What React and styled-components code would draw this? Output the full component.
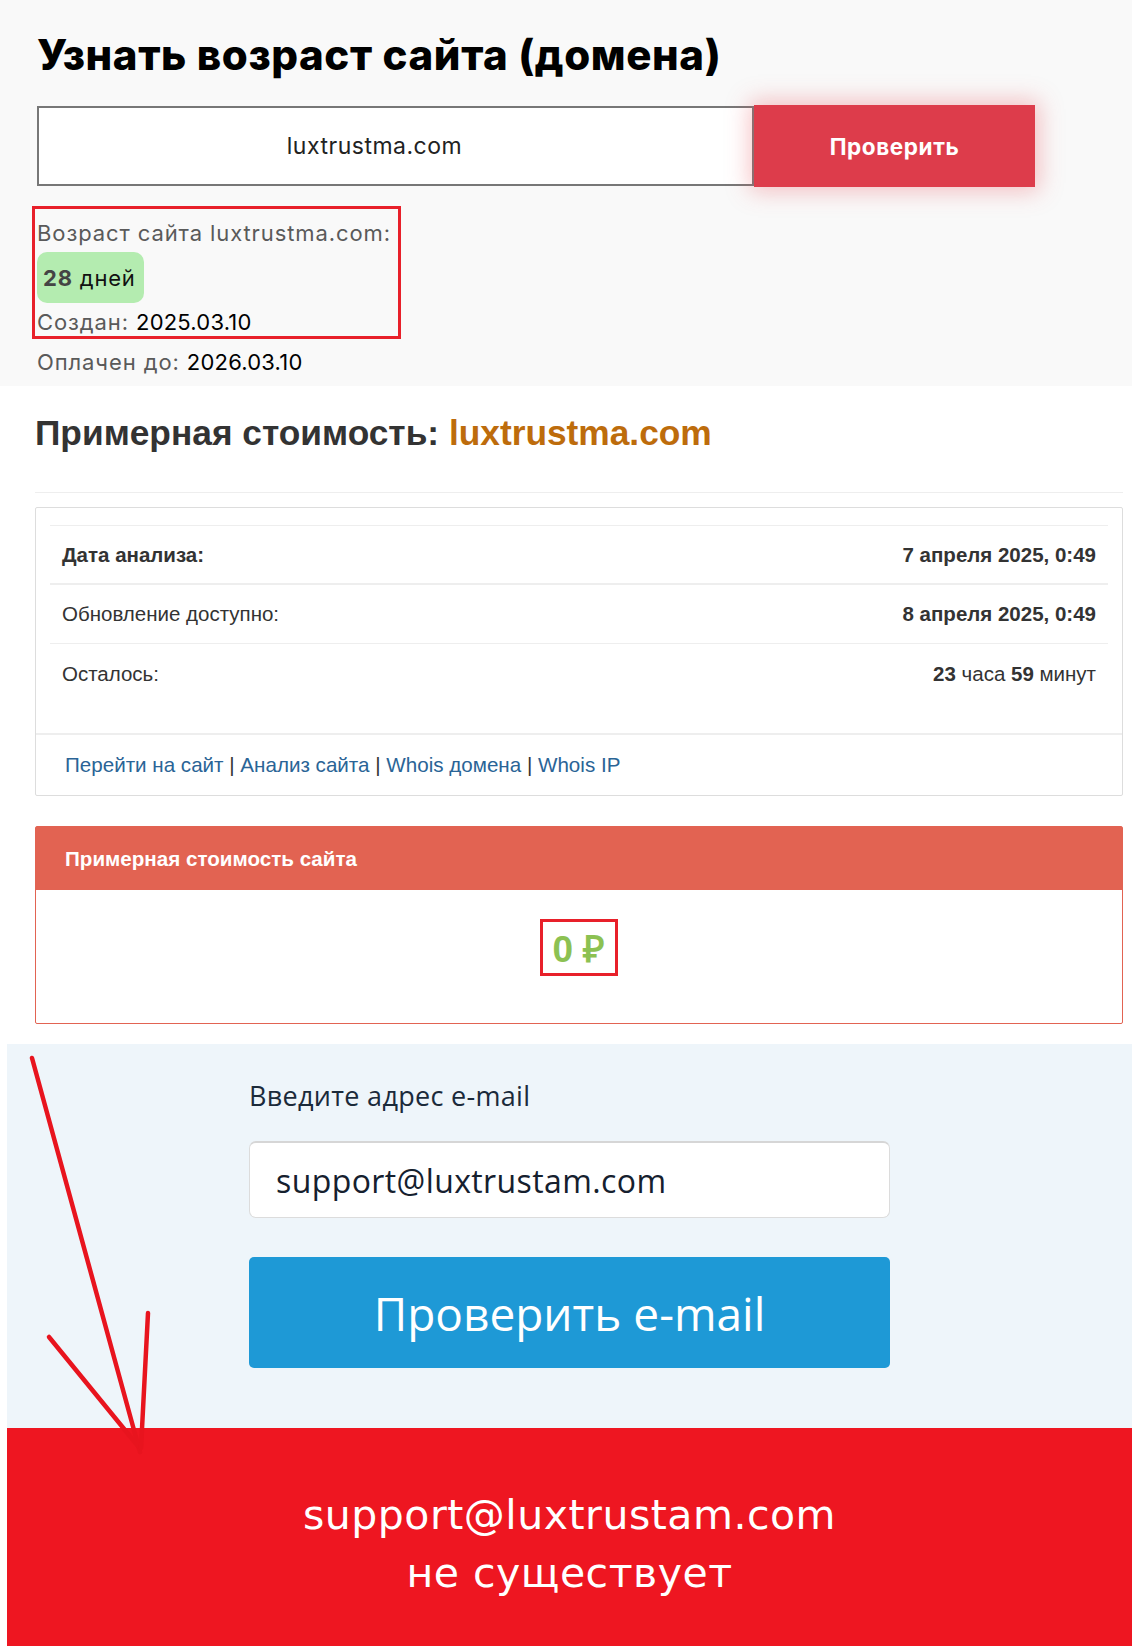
import React from 'react';
import styled, { createGlobalStyle } from 'styled-components';

const GlobalStyle = createGlobalStyle`
  body {
    margin: 0;
    background: #fff;
    font-family: "Liberation Sans", Arial, sans-serif;
  }
`;

const geo = `"Inter", "Noto Sans", sans-serif`;
const humanist = `"Open Sans", "Noto Sans", sans-serif`;

const Page = styled.div`
  position: relative;
  width: 1132px;
  min-height: 1646px;
  overflow: hidden;
`;

/* ---------- domain age block ---------- */

const AgeSection = styled.section`
  background: #f9f9f9;
  padding: 31px 37px 10px;
  font-family: ${geo};
`;

const Title = styled.h1`
  margin: 0;
  font-size: 42px;
  line-height: 48px;
  font-weight: 800;
  color: #000;
  letter-spacing: 0.6px;
`;

const CheckForm = styled.div`
  display: flex;
  align-items: center;
  margin-top: 26px;
`;

const DomainInput = styled.div`
  box-sizing: border-box;
  width: 717px;
  height: 80px;
  border: 2px solid #777;
  background: #fff;
  display: flex;
  align-items: center;
  justify-content: center;
  padding-right: 42px;
  font-size: 23px;
  letter-spacing: 0.5px;
  color: #222;
`;

const RedButton = styled.button`
  width: 281px;
  height: 82px;
  border: 0;
  background: #dd3c4b;
  color: #fff;
  font-family: ${geo};
  font-weight: 700;
  font-size: 22.5px;
  letter-spacing: 0.6px;
  box-shadow: 0 0 22px 4px rgba(233, 80, 90, 0.35);
`;

const AgeBox = styled.div`
  box-sizing: border-box;
  width: 369px;
  margin: 19px 0 0 -5px;
  border: 3px solid #e8202a;
  padding: 10px 0 0 2px;
`;

const InfoLine = styled.div`
  font-size: 22px;
  letter-spacing: 0.9px;
  line-height: ${p => p.$lh || 28}px;
  color: #5a5a5a;
  margin-top: ${p => p.$mt || 0}px;
  white-space: nowrap;
`;

const Value = styled.span`
  color: #000;
  letter-spacing: 0.2px;
`;

const DaysBadge = styled.div`
  display: inline-flex;
  align-items: center;
  height: 51px;
  margin-top: 5px;
  padding: 0 8px 0 6px;
  border-radius: 10px;
  background: #b4ecb0;
  font-size: 22px;
  letter-spacing: 0.8px;
  color: #111;
  b {
    font-weight: 700;
    color: #444;
    margin-right: 7px;
  }
`;

/* ---------- estimate block ---------- */

const EstimateSection = styled.section`
  padding: 28px 9px 20px 35px;
`;

const EstimateTitle = styled.h2`
  margin: 0;
  font-size: 35.3px;
  line-height: 38px;
  font-weight: 700;
  color: #333;
  span {
    color: #bd6c0c;
  }
`;

const Divider = styled.hr`
  margin: 40px 0 14px;
  border: 0;
  border-top: 1px solid #eee;
`;

const Card = styled.div`
  border: 1px solid #ddd;
  border-radius: 2px;
`;

const CardBody = styled.div`
  padding: 17px 14px 30px;
`;

const Row = styled.div`
  display: flex;
  justify-content: space-between;
  align-items: center;
  height: ${p => p.$h}px;
  padding: 0 12px;
  border-top: ${p => p.$top ? '1px solid #eee' : '0'};
  border-bottom: ${p => p.$bottom || 0}px solid #eee;
  font-size: 20.5px;
  color: #333;
  font-weight: ${p => p.$bold ? 700 : 400};
`;

const Right = styled.div`
  font-weight: 700;
  span {
    font-weight: 400;
  }
`;

const CardFooter = styled.div`
  height: 60px;
  border-top: 2px solid #eee;
  display: flex;
  align-items: center;
  padding-left: 29px;
  font-size: 20.6px;
  color: #333;
  a {
    color: #2a6496;
    text-decoration: none;
  }
`;

const PricePanel = styled.div`
  margin-top: 30px;
  border: 1px solid #e26352;
  border-radius: 2px;
`;

const PanelHead = styled.div`
  height: 63px;
  background: #e26352;
  color: #fff;
  font-weight: 700;
  font-size: 20.6px;
  display: flex;
  align-items: center;
  padding-left: 29px;
`;

const PanelBody = styled.div`
  height: 133px;
  display: flex;
  justify-content: center;
  padding-top: 29px;
  box-sizing: border-box;
`;

const PriceMark = styled.div`
  height: 57px;
  box-sizing: border-box;
  border: 3px solid #e8202a;
  padding: 0 10px;
  display: flex;
  align-items: center;
  font-size: 37px;
  font-weight: 700;
  color: #8cc152;
`;

/* ---------- email check ---------- */

const EmailSection = styled.section`
  margin-left: 7px;
  background: #eef5fa;
  padding: 37px 0 60px 242px;
  font-family: ${humanist};
`;

const EmailLabel = styled.div`
  font-size: 27px;
  letter-spacing: 0.3px;
  line-height: 30px;
  font-weight: 500;
  color: #1b2a3a;
`;

const EmailInput = styled.div`
  box-sizing: border-box;
  width: 641px;
  height: 77px;
  margin-top: 30px;
  background: #fff;
  border: 1px solid #dcdcdc;
  border-top: 2px solid #d6d6d6;
  border-radius: 7px;
  display: flex;
  align-items: center;
  padding-left: 26px;
  font-size: 32px;
  letter-spacing: 0.4px;
  font-weight: 500;
  color: #15202e;
`;

const BlueButton = styled.button`
  display: block;
  width: 641px;
  height: 111px;
  margin-top: 39px;
  border: 0;
  border-radius: 5px;
  background: #1e99d6;
  color: #fff;
  font-family: ${humanist};
  font-size: 46px;
`;

const ResultBanner = styled.section`
  margin-left: 7px;
  height: 218px;
  background: #ee1621;
  color: #fff;
  font-family: "DejaVu Sans", "Open Sans", sans-serif;
  font-size: 41px;
  letter-spacing: 0.5px;
  line-height: 58px;
  text-align: center;
  padding-top: 58px;
  box-sizing: border-box;
`;

const ArrowLayer = styled.svg`
  position: absolute;
  left: 0;
  top: 0;
  pointer-events: none;
`;

export default function App() {
  return (
    <Page>
      <GlobalStyle />
      <AgeSection>
        <Title>Узнать возраст сайта (домена)</Title>
        <CheckForm>
          <DomainInput>luxtrustma.com</DomainInput>
          <RedButton>Проверить</RedButton>
        </CheckForm>
        <AgeBox>
          <InfoLine>Возраст сайта luxtrustma.com:</InfoLine>
          <DaysBadge><b>28</b>дней</DaysBadge>
          <InfoLine $mt={6} $lh={27}>Создан: <Value>2025.03.10</Value></InfoLine>
        </AgeBox>
        <InfoLine $mt={9}>Оплачен до: <Value>2026.03.10</Value></InfoLine>
      </AgeSection>

      <EstimateSection>
        <EstimateTitle>Примерная стоимость: <span>luxtrustma.com</span></EstimateTitle>
        <Divider />
        <Card>
          <CardBody>
            <Row $h={57} $top $bottom={2} $bold>
              <div>Дата анализа:</div>
              <Right>7 апреля 2025, 0:49</Right>
            </Row>
            <Row $h={58} $bottom={1}>
              <div>Обновление доступно:</div>
              <Right>8 апреля 2025, 0:49</Right>
            </Row>
            <Row $h={59}>
              <div>Осталось:</div>
              <Right>23 <span>часа</span> 59 <span>минут</span></Right>
            </Row>
          </CardBody>
          <CardFooter>
            <a href="#go">Перейти на сайт</a>&nbsp;|&nbsp;
            <a href="#analysis">Анализ сайта</a>&nbsp;|&nbsp;
            <a href="#whois">Whois домена</a>&nbsp;|&nbsp;
            <a href="#ip">Whois IP</a>
          </CardFooter>
        </Card>
        <PricePanel>
          <PanelHead>Примерная стоимость сайта</PanelHead>
          <PanelBody>
            <PriceMark>0 ₽</PriceMark>
          </PanelBody>
        </PricePanel>
      </EstimateSection>

      <EmailSection>
        <EmailLabel>Введите адрес e-mail</EmailLabel>
        <EmailInput>support@luxtrustam.com</EmailInput>
        <BlueButton>Проверить e-mail</BlueButton>
      </EmailSection>

      <ResultBanner>
        support@luxtrustam.com<br />не существует
      </ResultBanner>

      <ArrowLayer width="1132" height="1646" viewBox="0 0 1132 1646">
        <g stroke="#e8141e" strokeWidth="4.5" strokeLinecap="round" fill="none">
          <path d="M32 1058 L140 1452" />
          <path d="M49 1337 L138 1446" />
          <path d="M148 1313 L141 1448" />
        </g>
      </ArrowLayer>
    </Page>
  );
}
